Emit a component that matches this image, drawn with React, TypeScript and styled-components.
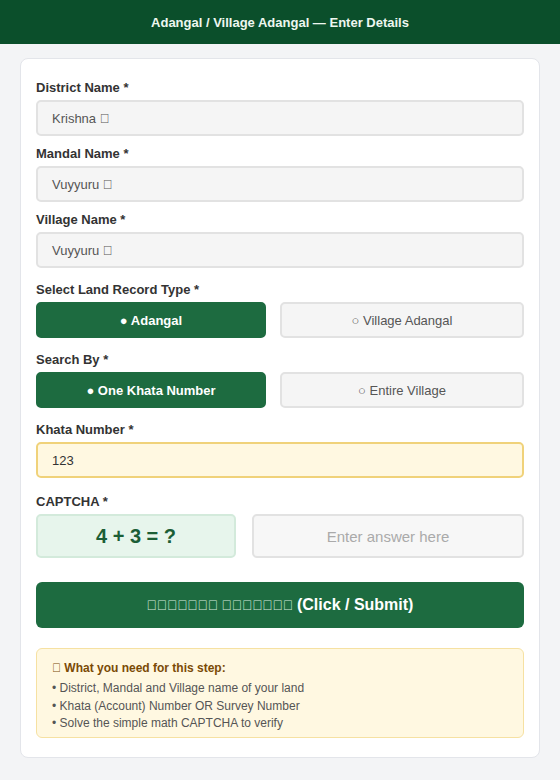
import React from "react";
import styled, { createGlobalStyle } from "styled-components";

const Global = createGlobalStyle`
  html, body { margin: 0; padding: 0; background: #f3f4f6; }
  body { font-family: "Liberation Sans", Arial, sans-serif; }
  * { box-sizing: border-box; }
`;

const TOFU = "\uE000";
const tofu = (n: number) => TOFU.repeat(n);

const Page = styled.div`
  width: 560px;
  min-height: 780px;
  background: #f3f4f6;
`;

const Header = styled.header`
  height: 44px;
  background: #0b4f2b;
  color: #eef7f0;
  display: flex;
  align-items: center;
  justify-content: center;
  font-size: 13px;
  font-weight: 700;
`;

const Card = styled.main`
  margin: 14px 20px 0;
  background: #ffffff;
  border: 1px solid #e3e5ea;
  border-radius: 8px;
  padding: 22px 15px 19px;
  display: flex;
  flex-direction: column;
`;

const Field = styled.div<{ $mb?: number }>`
  display: flex;
  flex-direction: column;
  gap: 5px;
  margin-bottom: ${(p) => p.$mb ?? 11}px;
`;

const Label = styled.label`
  font-size: 13px;
  font-weight: 700;
  color: #333333;
  line-height: 14px;
`;

const Input = styled.div<{ $highlight?: boolean }>`
  height: 36px;
  border-radius: 5px;
  border: ${(p) => (p.$highlight ? "2px solid #f0d27a" : "2px solid #e2e2e2")};
  background: ${(p) => (p.$highlight ? "#fff8e1" : "#f5f5f5")};
  color: ${(p) => (p.$highlight ? "#333333" : "#555555")};
  font-size: 13px;
  display: flex;
  align-items: center;
  padding-left: 14px;
`;

const Options = styled.div`
  display: grid;
  grid-template-columns: 230px 1fr;
  gap: 14px;
`;

const Option = styled.div<{ $active?: boolean }>`
  height: 36px;
  border-radius: 5px;
  display: flex;
  align-items: center;
  justify-content: center;
  font-size: 13px;
  font-weight: ${(p) => (p.$active ? 700 : 400)};
  background: ${(p) => (p.$active ? "#1d6b40" : "#f5f5f5")};
  color: ${(p) => (p.$active ? "#ffffff" : "#555555")};
  border: 2px solid ${(p) => (p.$active ? "#1d6b40" : "#e2e2e2")};
`;

const CaptchaRow = styled.div`
  display: grid;
  grid-template-columns: 200px 1fr;
  gap: 16px;
`;

const CaptchaBox = styled.div`
  height: 44px;
  border-radius: 5px;
  background: #e7f5ec;
  border: 2px solid #d3eadb;
  color: #1b5e36;
  font-size: 20px;
  font-weight: 700;
  display: flex;
  align-items: center;
  justify-content: center;
`;

const AnswerBox = styled.div`
  height: 44px;
  border-radius: 5px;
  background: #f7f7f7;
  border: 2px solid #e2e2e2;
  color: #aaaaaa;
  font-size: 15px;
  display: flex;
  align-items: center;
  justify-content: center;
`;

const Submit = styled.button`
  margin-top: 24px;
  height: 46px;
  border: none;
  border-radius: 6px;
  background: #1d6b40;
  color: #ffffff;
  font-family: inherit;
  font-size: 16px;
  font-weight: 700;
  display: flex;
  align-items: center;
  justify-content: center;
  gap: 4px;
`;

const Missing = styled.span`
  font-size: 14px;
  font-weight: 400;
  color: #d6eadc;
  letter-spacing: -0.3px;
`;

const Info = styled.section`
  margin-top: 20px;
  background: #fff8e1;
  border: 1px solid #f6e1a2;
  border-radius: 6px;
  padding: 11px 15px 4px;
  display: flex;
  flex-direction: column;
`;

const InfoTitle = styled.div`
  font-size: 12px;
  font-weight: 700;
  color: #7a4a06;
  line-height: 16px;
  margin-bottom: 4px;
`;

const InfoLine = styled.div`
  font-size: 12px;
  color: #555555;
  line-height: 17.5px;
`;

export default function App() {
  return (
    <Page>
      <Global />
      <Header>Adangal / Village Adangal — Enter Details</Header>
      <Card>
        <Field>
          <Label>District Name *</Label>
          <Input>Krishna {TOFU}</Input>
        </Field>
        <Field>
          <Label>Mandal Name *</Label>
          <Input>Vuyyuru {TOFU}</Input>
        </Field>
        <Field $mb={15}>
          <Label>Village Name *</Label>
          <Input>Vuyyuru {TOFU}</Input>
        </Field>
        <Field $mb={15}>
          <Label>Select Land Record Type *</Label>
          <Options>
            <Option $active>● Adangal</Option>
            <Option>○ Village Adangal</Option>
          </Options>
        </Field>
        <Field $mb={15}>
          <Label>Search By *</Label>
          <Options>
            <Option $active>● One Khata Number</Option>
            <Option>○ Entire Village</Option>
          </Options>
        </Field>
        <Field $mb={17}>
          <Label>Khata Number *</Label>
          <Input $highlight>123</Input>
        </Field>
        <Field $mb={0}>
          <Label>CAPTCHA *</Label>
          <CaptchaRow>
            <CaptchaBox>4 + 3 = ?</CaptchaBox>
            <AnswerBox>Enter answer here</AnswerBox>
          </CaptchaRow>
        </Field>
        <Submit>
          <Missing>{tofu(7)} {tofu(7)}</Missing>
          (Click / Submit)
        </Submit>
        <Info>
          <InfoTitle>{TOFU} What you need for this step:</InfoTitle>
          <InfoLine>• District, Mandal and Village name of your land</InfoLine>
          <InfoLine>• Khata (Account) Number OR Survey Number</InfoLine>
          <InfoLine>• Solve the simple math CAPTCHA to verify</InfoLine>
        </Info>
      </Card>
    </Page>
  );
}
